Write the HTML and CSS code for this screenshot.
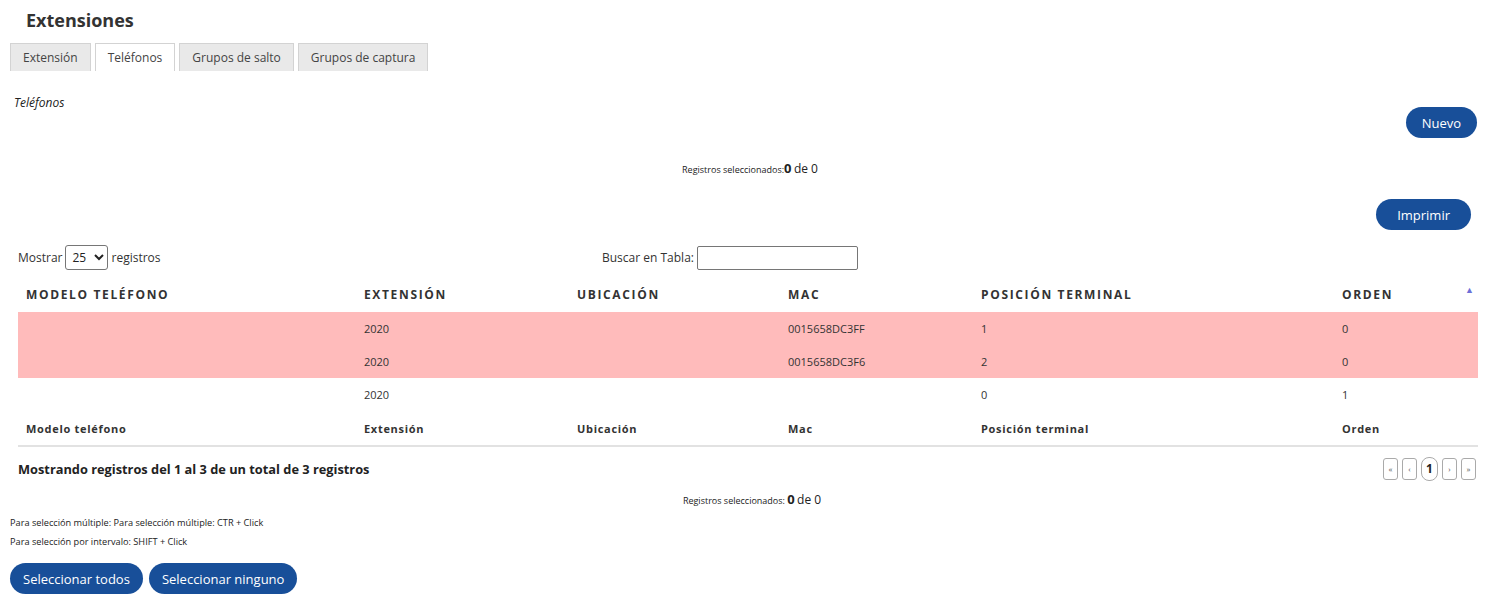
FILE: index.html
```html
<!DOCTYPE html>
<html lang="es">
<head>
<meta charset="utf-8">
<title>Extensiones</title>
<link rel="stylesheet" href="styles.css">
</head>
<body>
<h1 class="title">Extensiones</h1>
<ul class="tabs">
  <li class="tab">Extensión</li>
  <li class="tab active">Teléfonos</li>
  <li class="tab">Grupos de salto</li>
  <li class="tab">Grupos de captura</li>
</ul>
<div class="panel-label">Teléfonos</div>
<div class="btn-row btn-row-new"><button class="btn">Nuevo</button></div>
<div class="selected selected-top">Registros seleccionados:<b>0</b> <span class="of">de 0</span></div>
<div class="btn-row btn-row-print"><button class="btn">Imprimir</button></div>

<div class="controls">
  <label class="length">Mostrar <select class="len-select"><option>25</option></select> registros</label>
  <label class="filter">Buscar en Tabla: <input type="text" class="filter-input"></label>
</div>

<table class="grid">
  <colgroup>
    <col class="c1"><col class="c2"><col class="c3"><col class="c4"><col class="c5"><col class="c6">
  </colgroup>
  <thead>
    <tr>
      <th>Modelo teléfono</th>
      <th>Extensión</th>
      <th>Ubicación</th>
      <th>Mac</th>
      <th>Posición terminal</th>
      <th class="sorted">Orden<span class="sort-icon">▲</span></th>
    </tr>
  </thead>
  <tbody>
    <tr class="hl"><td></td><td>2020</td><td></td><td>0015658DC3FF</td><td>1</td><td>0</td></tr>
    <tr class="hl"><td></td><td>2020</td><td></td><td>0015658DC3F6</td><td>2</td><td>0</td></tr>
    <tr><td></td><td>2020</td><td></td><td></td><td>0</td><td>1</td></tr>
  </tbody>
  <tfoot>
    <tr>
      <th>Modelo teléfono</th>
      <th>Extensión</th>
      <th>Ubicación</th>
      <th>Mac</th>
      <th>Posición terminal</th>
      <th>Orden</th>
    </tr>
  </tfoot>
</table>

<div class="table-footer">
  <div class="info">Mostrando registros del 1 al 3 de un total de 3 registros</div>
  <div class="pager">
    <span class="pg">«</span>
    <span class="pg">‹</span>
    <span class="pg current">1</span>
    <span class="pg">›</span>
    <span class="pg">»</span>
  </div>
</div>

<div class="selected selected-bottom">Registros seleccionados: <b>0</b> <span class="of">de 0</span></div>

<p class="hint hint-first">Para selección múltiple: Para selección múltiple: CTR + Click</p>
<p class="hint">Para selección por intervalo: SHIFT + Click</p>

<div class="bottom-buttons">
  <button class="btn">Seleccionar todos</button>
  <button class="btn">Seleccionar ninguno</button>
</div>
</body>
</html>
```

FILE: styles.css
```css
* { box-sizing: border-box; }
html, body { margin: 0; padding: 0; background: #fff; }
body {
  font-family: "Open Sans", "Noto Sans", sans-serif;
  color: #333;
  font-size: 12px;
  width: 1500px;
  overflow: hidden;
}
.title {
  margin: 0;
  padding: 9px 0 0 26px;
  font-size: 18px;
  line-height: 22px;
  font-weight: 700;
  color: #333;
}
.tabs {
  list-style: none;
  margin: 12px 0 0 0;
  padding: 0 0 0 10px;
  display: flex;
  gap: 4px;
}
.tab {
  height: 28px;
  line-height: 28px;
  padding: 0 12px;
  border: 1px solid #d3d3d3;
  border-bottom: none;
  background: #e9e9e9;
  color: #444;
  font-size: 12px;
}
.tab.active { background: #fff; }
.panel-label {
  margin: 25px 0 0 14px;
  font-style: italic;
  font-size: 12px;
  line-height: 13px;
  color: #222;
}
.btn-row { display: flex; justify-content: flex-end; }
.btn-row-new { margin-top: -2px; padding-right: 23px; }
.btn-row-print { margin-top: 19px; padding-right: 29px; }
.btn {
  height: 31px;
  border: none;
  border-radius: 16px;
  background: #184f99;
  color: #fff;
  font-family: "Open Sans", "Noto Sans", sans-serif;
  font-size: 13px;
  padding: 0 16px;
  cursor: pointer;
}
.btn-row-print .btn { padding: 0 21px; }
.selected {
  text-align: center;
  font-size: 9px;
  height: 20px;
  line-height: 20px;
  color: #222;
}
.selected b { font-size: 13px; font-weight: 700; line-height: 1; }
.selected .of { font-size: 12px; line-height: 1; }
.selected-top { margin-top: 22px; }
.selected-bottom { margin-top: 11px; padding-left: 4px; }

.controls {
  margin: 15px 0 0 18px;
  width: 1460px;
  display: grid;
  grid-template-columns: 584px 1fr;
  align-items: center;
  height: 25px;
  font-size: 12px;
}
.length, .filter { display: flex; align-items: center; gap: 3px; white-space: nowrap; }
.len-select {
  width: 43px;
  height: 25px;
  font-family: "Open Sans", sans-serif;
  font-size: 12px;
  border: 1px solid #767676;
  border-radius: 3px;
  background: #fff;
  color: #222;
  padding: 0 2px;
}
.filter-input {
  width: 161px;
  height: 24px;
  border: 1px solid #767676;
  border-radius: 2px;
  padding: 0 4px;
}

.grid {
  margin: 10px 0 0 18px;
  width: 1460px;
  table-layout: fixed;
  border-collapse: collapse;
}
.c1 { width: 338px; }
.c2 { width: 213px; }
.c3 { width: 211px; }
.c4 { width: 193px; }
.c5 { width: 361px; }
.c6 { width: 144px; }
.grid th, .grid td {
  padding: 0 8px;
  text-align: left;
  vertical-align: middle;
}
.grid thead th {
  height: 32px;
  padding-bottom: 4px;
  font-size: 12px;
  font-weight: 700;
  text-transform: uppercase;
  letter-spacing: 1.65px;
  color: #333;
}
.grid thead th.sorted { position: relative; }
.sort-icon {
  position: absolute;
  right: 4px;
  top: 3px;
  font-size: 9px;
  letter-spacing: 0;
  color: #6d70d8;
}
.grid tbody td {
  height: 33px;
  font-size: 11px;
  color: #333;
}
.grid tbody tr.hl td { background: #ffbbbb; }
.grid tfoot th {
  height: 35px;
  font-size: 11px;
  font-weight: 700;
  letter-spacing: 0.7px;
  color: #333;
  border-bottom: 2px solid #e2e2e2;
}

.table-footer {
  margin: 10px 0 0 18px;
  width: 1460px;
  display: flex;
  justify-content: space-between;
  align-items: center;
  height: 23px;
}
.info {
  font-size: 12.8px;
  font-weight: 700;
  color: #222;
}
.pager { display: flex; gap: 4px; align-items: center; padding-right: 2px; }
.pg {
  display: flex;
  align-items: center;
  justify-content: center;
  width: 15px;
  height: 22px;
  border: 1px solid #aaa;
  border-radius: 3px;
  font-size: 8px;
  color: #555;
}
.pg.current {
  width: 17px;
  height: 24px;
  border-radius: 8px;
  font-size: 12px;
  font-weight: 700;
  color: #222;
}

.hint {
  margin: 0 0 0 10px;
  font-size: 9.2px;
  line-height: 19px;
  color: #222;
}
.hint-first { margin-top: 2px; }
.bottom-buttons {
  margin: 12px 0 0 10px;
  display: flex;
  gap: 6px;
}
.bottom-buttons .btn { padding: 0 13px; }
```
